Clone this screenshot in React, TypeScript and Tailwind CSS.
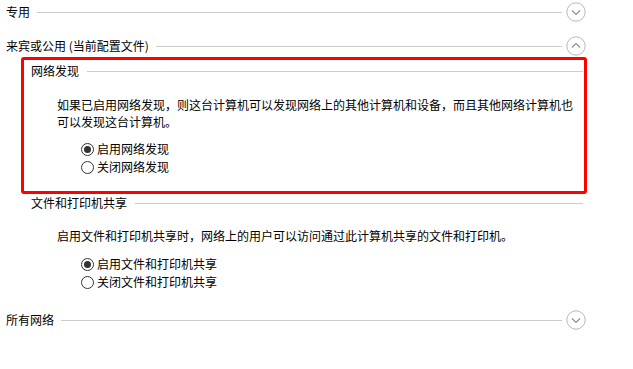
import React from "react";

const font = { fontFamily: '"Noto Sans CJK SC", "Microsoft YaHei", sans-serif' };

function Chevron({ up }: { up?: boolean }) {
  return (
    <svg width="20" height="20" viewBox="0 0 20 20" className="shrink-0">
      <circle cx="10" cy="10" r="9.2" fill="white" stroke="#b8b8b8" strokeWidth="1" />
      {up ? (
        <polyline points="6,11.5 10,7.5 14,11.5" fill="none" stroke="#8c8c8c" strokeWidth="1.1" />
      ) : (
        <polyline points="6,8.5 10,12.5 14,8.5" fill="none" stroke="#8c8c8c" strokeWidth="1.1" />
      )}
    </svg>
  );
}

function Heading({ title, up }: { title: string; up?: boolean }) {
  return (
    <div className="flex items-center h-[24px] pl-[6px] pr-[47px]">
      <span className="whitespace-nowrap leading-[24px]">{title}</span>
      <div className="flex-1 h-px bg-[#cccccc] ml-[7px] mr-[4px]" />
      <Chevron up={up} />
    </div>
  );
}

function SubHeading({ title }: { title: string }) {
  return (
    <div className="flex items-center h-[24px] pl-[31px] pr-[50px]">
      <span className="whitespace-nowrap leading-[24px]">{title}</span>
      <div className="flex-1 h-px bg-[#cccccc] ml-[8px]" />
    </div>
  );
}

function Radio({ label, checked }: { label: string; checked?: boolean }) {
  return (
    <div className="flex items-center h-[18px] pl-[81px]">
      <span className="w-[13px] h-[13px] rounded-full border border-[#333333] bg-white flex items-center justify-center shrink-0">
        {checked && <span className="w-[7px] h-[7px] rounded-full bg-[#333333]" />}
      </span>
      <span className="ml-[3px] leading-[18px] whitespace-nowrap">{label}</span>
    </div>
  );
}

export default function App() {
  return (
    <div
      className="relative w-[633px] h-[369px] bg-white text-black text-[12px] overflow-hidden flex flex-col"
      style={font}
    >
      <Heading title="专用" />
      <div className="mt-[10px]">
        <Heading title="来宾或公用 (当前配置文件)" up />
      </div>

      <div className="mt-[1px]">
        <SubHeading title="网络发现" />
        <p className="mt-[13px] ml-[57px] w-[520px] leading-[17px]">
          如果已启用网络发现，则这台计算机可以发现网络上的其他计算机和设备，而且其他网络计算机也可以发现这台计算机。
        </p>
        <div className="mt-[10px] flex flex-col">
          <Radio label="启用网络发现" checked />
          <Radio label="关闭网络发现" />
        </div>
      </div>

      <div className="mt-[15px]">
        <SubHeading title="文件和打印机共享" />
        <p className="mt-[12px] ml-[57px] w-[540px] leading-[17px]">
          启用文件和打印机共享时，网络上的用户可以访问通过此计算机共享的文件和打印机。
        </p>
        <div className="mt-[11px] flex flex-col">
          <Radio label="启用文件和打印机共享" checked />
          <Radio label="关闭文件和打印机共享" />
        </div>
      </div>

      <div className="mt-[17px]">
        <Heading title="所有网络" />
      </div>

      <div className="absolute left-[21px] top-[57px] w-[566px] h-[137px] border-[3px] border-[#ff0000] rounded-[3px] pointer-events-none" />
    </div>
  );
}
